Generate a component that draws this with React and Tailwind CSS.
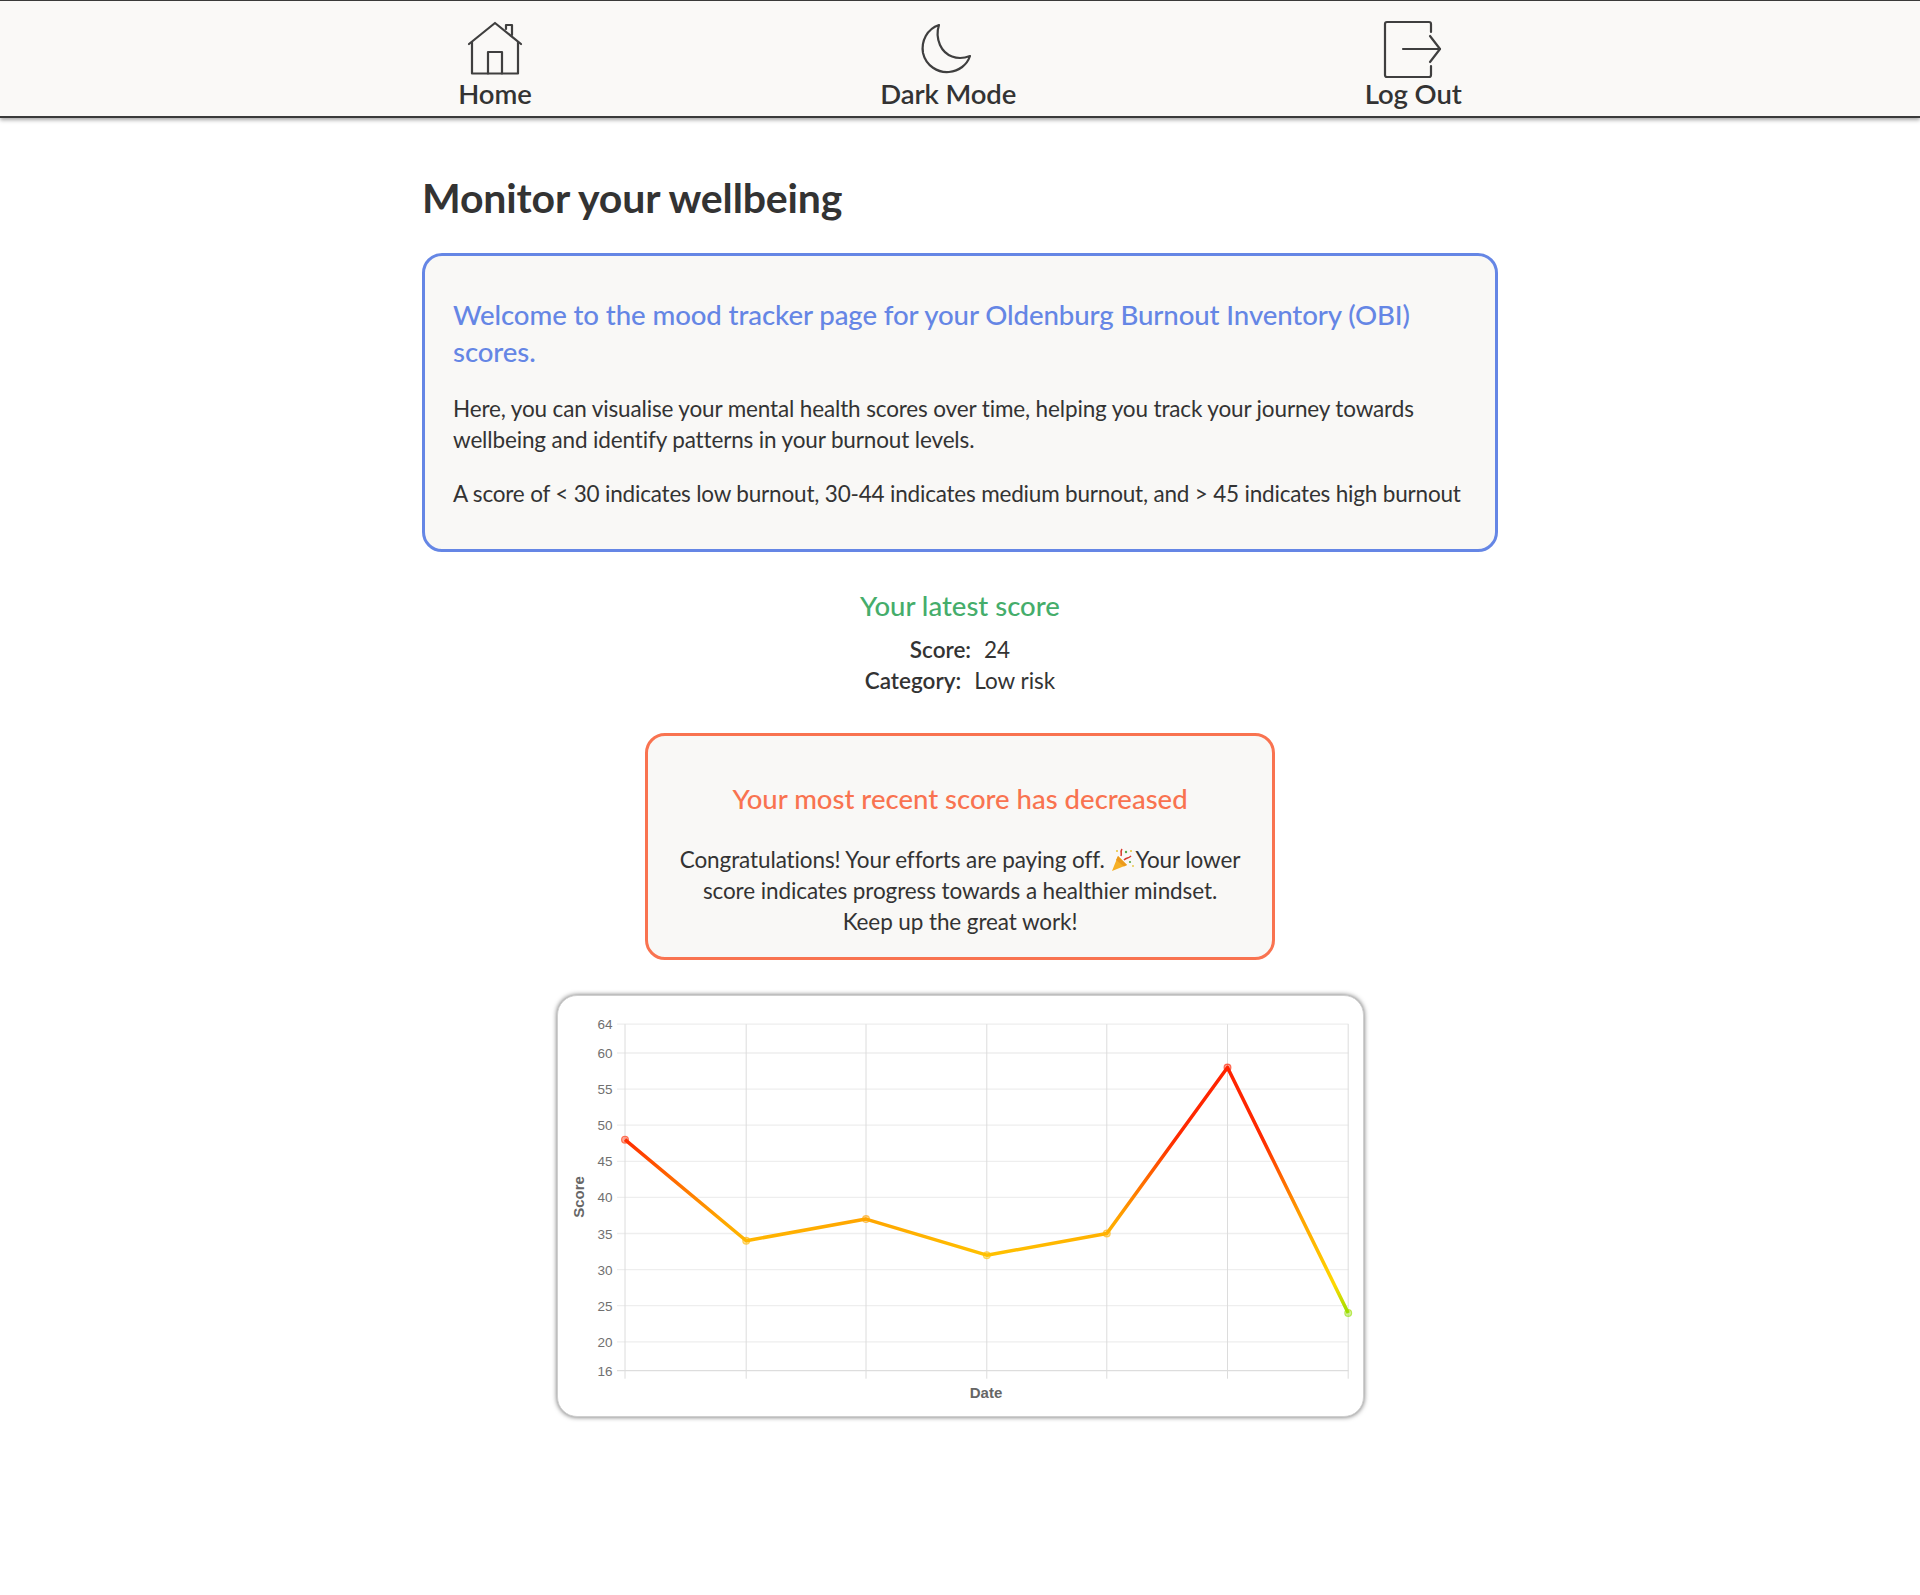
const FONT = "font-['Lato','Noto_Sans',sans-serif]";

function HomeIcon() {
  return (
    <svg width="60" height="60" viewBox="0 0 60 60" fill="none" stroke="#3f3f3f" strokeWidth="2.2" strokeLinejoin="round" strokeLinecap="round">
      <path d="M4 24 L30 3 L56 24" />
      <path d="M7 22 V53.5 H53 V22" />
      <path d="M23 53.5 V32 H37 V53.5" />
      <path d="M41 9 V5 H47 V15" />
    </svg>
  );
}

function MoonIcon() {
  return (
    <svg width="60" height="60" viewBox="-1 0 60 60" fill="none" stroke="#3f3f3f" strokeWidth="2.2" strokeLinejoin="round">
      <path d="M20 5 C8 9 2 21 4 33 C7 46 19 53 30 52 C40 51 48 45 51 36 C38 41 26 36 21 25 C18 18 18 11 20 5 Z" />
    </svg>
  );
}

function LogoutIcon() {
  return (
    <svg width="60" height="60" viewBox="3 0 60 60" fill="none" stroke="#3f3f3f" strokeWidth="2.2" strokeLinejoin="round" strokeLinecap="round">
      <path d="M51 12 V4 Q51 2 49 2 H7 Q5 2 5 4 V55 Q5 57 7 57 H49 Q51 57 51 55 V46" />
      <path d="M23 29 H60" />
      <path d="M50 16 L60 29 L50 42" />
    </svg>
  );
}

function Popper() {
  return (
    <svg width="24" height="24" viewBox="0 0 24 24" className="inline-block align-[-4px] mr-[1px]">
      <path d="M2 23 L8 8 L17 17 Z" fill="#f6b026" />
      <path d="M8 8 L17 17 L14 18.5 L6 12 Z" fill="#ec9a1c" />
      <path d="M11 8 C12 5 10 4 12 1" stroke="#d8392b" strokeWidth="1.5" fill="none" />
      <path d="M14 12 C17 9 18 11 21 8" stroke="#d8392b" strokeWidth="1.5" fill="none" />
      <circle cx="16" cy="4" r="1.2" fill="#5aa845" />
      <circle cx="21" cy="3" r="1" fill="#e7c43a" />
      <circle cx="20" cy="14" r="1.1" fill="#5aa845" />
      <circle cx="7" cy="3" r="1" fill="#e7c43a" />
      <circle cx="23" cy="18" r="0.9" fill="#e7c43a" />
    </svg>
  );
}

const xs = [67, 188.2, 308, 428.8, 548.8, 669.5, 790.2];
const vals = [48, 34, 37, 32, 35, 58, 24];
const ticks = [64, 60, 55, 50, 45, 40, 35, 30, 25, 20, 16];
const yOf = (v) => 374.7 - (v - 16) * 7.22;

function Chart() {
  const pts = xs.map((x, i) => `${x},${yOf(vals[i])}`).join(" ");
  return (
    <div className="w-[807px] h-[422px] mx-auto mt-[35px] bg-white rounded-[20px] border border-[#cfcfcf] shadow-[0_0_5px_rgba(0,0,0,0.6)] overflow-hidden">
      <svg width="805" height="420" viewBox="0 0 805 420" className="block">
        <defs>
          <linearGradient id="g" gradientUnits="userSpaceOnUse" x1="0" y1={yOf(23)} x2="0" y2={yOf(58)}>
            <stop offset="0" stopColor="#7fe000" />
            <stop offset="0.14" stopColor="#ffd800" />
            <stop offset="0.4" stopColor="#ffa500" />
            <stop offset="0.72" stopColor="#ff2a00" />
            <stop offset="1" stopColor="#ff2200" />
          </linearGradient>
        </defs>
        {ticks.map((t) => (
          <g key={t}>
            <line x1="59" x2="790.5" y1={yOf(t)} y2={yOf(t)} stroke={t === 16 ? "#dddddd" : "#eeeeee"} strokeWidth="1.3" />
            <text x="54.5" y={yOf(t) + 5} textAnchor="end" fontSize="13.5" fill="#707070" fontFamily="Liberation Sans">{t}</text>
          </g>
        ))}
        {xs.map((x) => (
          <line key={x} x1={x} x2={x} y1={yOf(64)} y2="382.7" stroke="#dcdcdc" strokeWidth="1" />
        ))}
        <polyline points={pts} fill="none" stroke="url(#g)" strokeWidth="3.5" strokeLinejoin="round" />
        {xs.map((x, i) => (
          <circle key={x} cx={x} cy={yOf(vals[i])} r="3.4" fill="url(#g)" fillOpacity="0.4" stroke="url(#g)" strokeOpacity="0.6" strokeWidth="1.2" />
        ))}
        <text x="428" y="402" textAnchor="middle" fontSize="15" fontWeight="700" fill="#666" fontFamily="Liberation Sans">Date</text>
        <text transform="translate(25.5 201) rotate(-90)" textAnchor="middle" fontSize="15" fontWeight="700" fill="#666" fontFamily="Liberation Sans">Score</text>
      </svg>
    </div>
  );
}

export default function App() {
  return (
    <div className={`${FONT} min-h-[1595px] bg-white text-[#333333]`}>
      <nav className="h-[118px] bg-[#faf9f7] border-t border-b-2 border-[#3a3a3a] shadow-[0_2px_4px_rgba(0,0,0,0.35)]">
        <div className="w-[1352px] mx-auto flex justify-around">
          {[["Home", HomeIcon], ["Dark Mode", MoonIcon], ["Log Out", LogoutIcon]].map(([label, Icon]) => (
            <div key={label} className="flex flex-col items-center pt-[19px]">
              <Icon />
              <span className="font-['Lato_Semibold','Lato',sans-serif] text-[27.5px] leading-[30px] font-semibold tracking-[-0.1px] mt-[-1px]">{label}</span>
            </div>
          ))}
        </div>
      </nav>

      <main className="w-[1076px] mx-auto">
        <h1 className="text-[41px] leading-[50px] font-bold tracking-[-0.15px] mt-[55px] text-[#333333]">Monitor your wellbeing</h1>

        <section className="mt-[30px] h-[299px] bg-[#f9f8f6] border-[3px] border-[#6586e5] rounded-[20px] pt-[40px] px-[28px]">
          <h2 className="font-['Lato_Medium','Lato',sans-serif] text-[27.6px] leading-[37px] font-medium text-[#6586e5] tracking-[-0.1px]">
            Welcome to the mood tracker page for your Oldenburg Burnout Inventory (OBI) scores.
          </h2>
          <p className="text-[22.5px] leading-[31px] mt-[23px] tracking-[-0.14px]">
            Here, you can visualise your mental health scores over time, helping you track your journey towards wellbeing and identify patterns in your burnout levels.
          </p>
          <p className="text-[22.5px] leading-[31px] mt-[23px] tracking-[-0.19px] whitespace-nowrap">
            A score of &lt; 30 indicates low burnout, 30-44 indicates medium burnout, and &gt; 45 indicates high burnout
          </p>
        </section>

        <section className="text-center mt-[36px]">
          <h3 className="font-['Lato_Medium','Lato',sans-serif] text-[27.5px] leading-[36px] font-medium text-[#45ad6b]">Your latest score</h3>
          <div className="text-[22.5px] leading-[31px] mt-[10px]">
            <div><span className="font-['Lato_Semibold','Lato',sans-serif] font-semibold">Score:</span><span className="ml-[13px]">24</span></div>
            <div><span className="font-['Lato_Semibold','Lato',sans-serif] font-semibold">Category:</span><span className="ml-[13px]">Low risk</span></div>
          </div>
        </section>

        <section className="w-[630px] h-[227px] mx-auto mt-[37px] bg-[#f9f8f6] border-[3px] border-[#f97350] rounded-[20px] text-center pt-[45px] px-[30px]">
          <h3 className="font-['Lato_Medium','Lato',sans-serif] text-[27.5px] leading-[36px] font-medium text-[#f97350] whitespace-nowrap">Your most recent score has decreased</h3>
          <p className="text-[22.5px] leading-[31px] mt-[27px] tracking-[-0.1px]">
            Congratulations! Your efforts are paying off. <Popper />Your lower score indicates progress towards a healthier mindset. Keep up the great work!
          </p>
        </section>

        <Chart />
      </main>
    </div>
  );
}
